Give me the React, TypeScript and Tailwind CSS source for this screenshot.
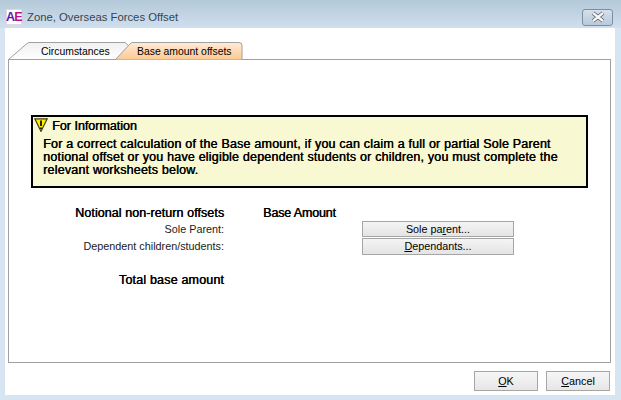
export default function App() {
  const font = "font-['Liberation_Sans',Arial,sans-serif]";
  const bold = "text-[12.5px] [text-shadow:0.45px_0_0_#000]";
  return (
    <div className={`w-[621px] h-[400px] flex flex-col overflow-hidden bg-[#d7e5f3] text-[10.8px] leading-[13px] text-black ${font}`}>
      <div className="h-[28px] shrink-0 flex items-center bg-gradient-to-b from-[#b4c9d9] to-[#cfdfef] pl-[6px] pr-[8px] pt-[6px]">
        <div className="w-[16px] h-[16px] bg-white border border-[#e0d8ea] flex items-center justify-center mr-[5px] text-[12.5px] font-bold tracking-[-0.6px]">
          <span className="text-[#5a1ab0]">A</span>
          <span className="text-[#c0108c]">E</span>
        </div>
        <span className="text-[#37444f] text-[11.3px]">Zone, Overseas Forces Offset</span>
        <div className="ml-auto w-[31px] h-[17px] rounded-[3px] border border-[#7c8ea6] bg-gradient-to-b from-[#d5e0ea] to-[#b9cadb] flex items-center justify-center">
          <svg width="16" height="12" viewBox="0 0 16 12">
            <path d="M3 2 L13 10 M13 2 L3 10" stroke="#555c66" strokeWidth="4" fill="none" />
            <path d="M3 2 L13 10 M13 2 L3 10" stroke="#f6f7f9" strokeWidth="2.4" fill="none" />
          </svg>
        </div>
      </div>

      <div className="flex-1 ml-[5px] mr-[6px] mb-[5px] bg-white flex flex-col pl-[3px] pr-[4px] pt-[14px]">
        <div className="h-[17px] flex shrink-0 relative z-10 text-[10.4px]">
          <div className="relative w-[122px] h-[18px] flex items-center pl-[33px] whitespace-nowrap">
            <svg className="absolute left-0 top-0" width="122" height="18" viewBox="0 0 122 18">
              <defs>
                <linearGradient id="t1" x1="0" y1="0" x2="0" y2="1">
                  <stop offset="0" stopColor="#f0f0f0" />
                  <stop offset="1" stopColor="#ffffff" />
                </linearGradient>
              </defs>
              <path d="M0.5 17.5 L19 1.5 Q20 0.5 22 0.5 L117 0.5 L121 4 L121 17.5 Z" fill="url(#t1)" stroke="#a0a0a0" />
            </svg>
            <span className="relative">Circumstances</span>
          </div>
          <div className="relative -ml-[15px] w-[128px] h-[18px] flex items-center pl-[22px] whitespace-nowrap">
            <svg className="absolute left-0 top-0" width="128" height="18" viewBox="0 0 128 18">
              <defs>
                <linearGradient id="t2" x1="0" y1="0" x2="0" y2="1">
                  <stop offset="0" stopColor="#fdecd8" />
                  <stop offset="1" stopColor="#fdc890" />
                </linearGradient>
              </defs>
              <path d="M0 18 L15 2 Q16 0.5 18 0.5 L124 0.5 Q127 0.5 127 3.5 L127 18 Z" fill="url(#t2)" stroke="#a0a0a0" />
            </svg>
            <span className="relative">Base amount offsets</span>
          </div>
        </div>

        <div className="h-[304px] shrink-0 border border-[#a0a0a0] pt-[55px]">
          <div className="ml-[22px] w-[557px] h-[73px] border-2 border-black bg-[#f8f8d2] pl-[1px] pt-[1px]">
            <div className="flex items-start h-[16px]">
              <svg width="14" height="14" viewBox="0 0 14 14" className="shrink-0">
                <path d="M0.8 0.8 L13.2 0.8 L7 13.4 Z" fill="#ffec00" stroke="#3e3e18" strokeWidth="1.2" />
                <path d="M7 2.5 L7 8 M7 9.5 L7 11" stroke="#000" strokeWidth="1.7" />
              </svg>
              <span className={`ml-[4px] mt-[2px] ${bold}`}>For Information</span>
            </div>
            <p className={`ml-[9px] mt-[4px] w-[540px] tracking-[0.2px] ${bold}`}>
              For a correct calculation of the Base amount, if you can claim a full or partial Sole Parent<br />
              notional offset or you have eligible dependent students or children, you must complete the<br />
              relevant worksheets below.
            </p>
          </div>

          <div className="mt-[17px] grid grid-cols-[215px_138px_152px] grid-rows-[16px_17px_17px]">
            <div className={`text-right self-center tracking-[0.07px] ${bold}`}>Notional non-return offsets</div>
            <div className={`pl-[39px] self-center tracking-[-0.15px] ${bold}`}>Base Amount</div>
            <div />
            <div className="text-right self-center text-[#1a1a1a]">Sole Parent:</div>
            <div />
            <button className="h-[16px] border border-[#a6a6a6] bg-gradient-to-b from-[#f4f4f4] to-[#e4e4e4] flex items-center justify-center">
              <span>Sole pa<u>r</u>ent...</span>
            </button>
            <div className="text-right self-center text-[#1a1a1a]">Dependent children/students:</div>
            <div />
            <button className="h-[17px] border border-[#a6a6a6] bg-gradient-to-b from-[#f4f4f4] to-[#e4e4e4] flex items-center justify-center">
              <span><u>D</u>ependants...</span>
            </button>
          </div>
          <div className={`mt-[19px] w-[215px] text-right tracking-[0.18px] ${bold}`}>Total base amount</div>
        </div>

        <div className="flex justify-end gap-[8px] pt-[8px] pr-[1px]">
          <button className="w-[64px] h-[20px] border border-[#a6a6a6] bg-gradient-to-b from-[#f6f6f6] to-[#e6e6e6] flex items-center justify-center">
            <span><u>O</u>K</span>
          </button>
          <button className="w-[64px] h-[20px] border border-[#a6a6a6] bg-gradient-to-b from-[#f6f6f6] to-[#e6e6e6] flex items-center justify-center">
            <span><u>C</u>ancel</span>
          </button>
        </div>
      </div>
    </div>
  );
}
